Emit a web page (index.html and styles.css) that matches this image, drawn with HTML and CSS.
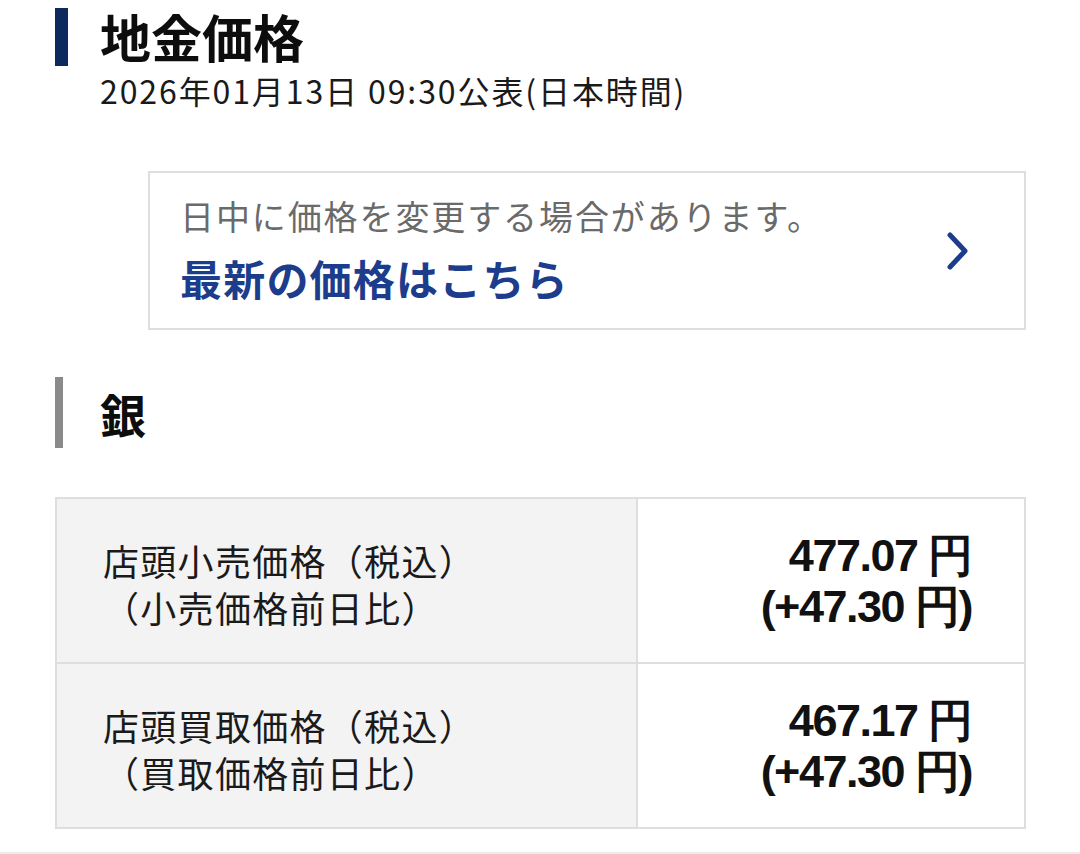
FILE: index.html
```html
<!DOCTYPE html>
<html lang="ja">
<head>
<meta charset="utf-8">
<link rel="stylesheet" href="styles.css">
</head>
<body>
<div class="page">
  <section class="heading heading-main">
    <div class="bar bar-navy"></div>
    <div class="heading-body">
      <h1 class="title">地金価格</h1>
      <p class="date">2026年01月13日 09:30公表(日本時間)</p>
    </div>
  </section>

  <a class="notice" href="#">
    <div class="notice-text">
      <p class="notice-sub">日中に価格を変更する場合があります。</p>
      <p class="notice-link">最新の価格はこちら</p>
    </div>
    <svg class="chevron" width="24" height="38" viewBox="0 0 24 38"><path d="M4 3 L19 19 L4 35" fill="none" stroke="#1c3c8c" stroke-width="5" stroke-linecap="round" stroke-linejoin="round"/></svg>
  </a>

  <section class="heading heading-sub">
    <div class="bar bar-gray"></div>
    <h2 class="subtitle">銀</h2>
  </section>

  <table class="price-table">
    <colgroup>
      <col class="col-label">
      <col class="col-value">
    </colgroup>
    <tr>
      <th class="label">店頭小売価格（税込）<br>（小売価格前日比）</th>
      <td class="value">477.07 円<br>(+47.30 円)</td>
    </tr>
    <tr>
      <th class="label">店頭買取価格（税込）<br>（買取価格前日比）</th>
      <td class="value">467.17 円<br>(+47.30 円)</td>
    </tr>
  </table>
</div>
<div class="footer-line"></div>
</body>
</html>
```

FILE: styles.css
```css
html, body {
  margin: 0;
  padding: 0;
  background: #ffffff;
}
body {
  font-family: "Noto Sans CJK JP", "Noto Sans", sans-serif;
  color: #111;
  width: 1080px;
  height: 854px;
  overflow: hidden;
  position: relative;
}
p, h1, h2 { margin: 0; }
.page {
  padding: 8px 54px 0 55px;
}
.heading {
  display: flex;
  gap: 32px;
}
.bar {
  flex: none;
}
.bar-navy {
  width: 13px;
  height: 58px;
  background: #0c2a5c;
}
.bar-gray {
  width: 8px;
  height: 71px;
  background: #8a8a8a;
  margin-right: 5px;
}
.title {
  font-size: 51px;
  font-weight: 700;
  line-height: 58px;
  margin-top: -1px;
  color: #0d0d0d;
}
.date {
  font-size: 32px;
  line-height: 40px;
  margin-top: 5px;
  color: #1a1a1a;
  letter-spacing: 1.9px;
}
.notice {
  display: flex;
  align-items: center;
  justify-content: space-between;
  margin: 61px 0 0 93px;
  height: 159px;
  border: 2px solid #dedede;
  padding: 0 54px 0 30px;
  text-decoration: none;
  box-sizing: border-box;
}
.notice-text {
  display: flex;
  flex-direction: column;
  gap: 12px;
  margin-top: -1px;
}
.notice-sub {
  font-size: 34px;
  line-height: 44px;
  color: #6a6a6a;
  letter-spacing: 1.9px;
}
.notice-link {
  font-size: 42px;
  font-weight: 700;
  line-height: 56px;
  color: #1c3c8c;
  letter-spacing: 1.2px;
}
.chevron {
  flex: none;
}
.heading-sub {
  margin-top: 47px;
  align-items: center;
}
.subtitle {
  font-size: 46px;
  font-weight: 700;
  line-height: 56px;
  color: #0d0d0d;
}
.price-table {
  margin-top: 49px;
  width: 971px;
  border-collapse: collapse;
  table-layout: fixed;
}
.col-label {
  width: 581px;
}
.price-table th,
.price-table td {
  border: 2px solid #dedede;
  height: 157px;
  padding: 0;
}
.label {
  background: #f3f3f3;
  text-align: left;
  vertical-align: middle;
  font-weight: 400;
  font-size: 36px;
  line-height: 47px;
  padding-left: 46px !important;
  padding-top: 6px !important;
  color: #1a1a1a;
  letter-spacing: 1.3px;
}
.value {
  background: #fff;
  text-align: right;
  vertical-align: middle;
  font-family: "Liberation Sans", Arial, sans-serif;
  font-weight: 700;
  font-size: 45px;
  line-height: 51px;
  padding-right: 52px !important;
  color: #111;
  letter-spacing: -1.5px;
}
.footer-line {
  position: absolute;
  left: 0;
  right: 0;
  bottom: 0;
  height: 2px;
  background: #ececec;
}
```
